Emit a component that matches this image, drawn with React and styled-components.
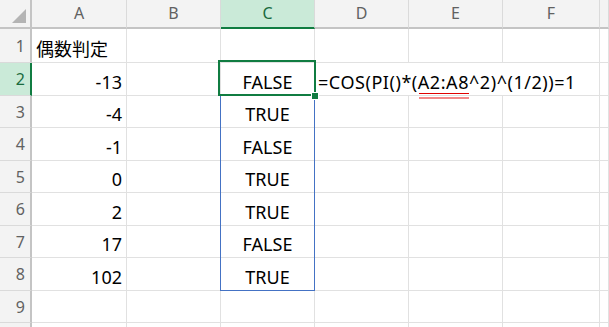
import styled, { createGlobalStyle, css } from 'styled-components'

const GlobalStyle = createGlobalStyle`
  html, body {
    margin: 0;
    padding: 0;
    background: #ffffff;
    overflow: hidden;
  }
  body {
    font-family: "Noto Sans", "Noto Sans CJK JP", sans-serif;
  }
`

const green = '#107c41'
const blue = '#4472c4'
const grid = '#e1e1e1'

const Sheet = styled.div`
  display: grid;
  grid-template-columns: 32px 95px 94px 94px 94px 94px 97px 1fr;
  grid-template-rows: 29px 34px 33px 32px 33px 32px 33px 32px 33px 32px 32px;
  width: 609px;
  height: 327px;
  overflow: hidden;
  background: #fff;
`

const Corner = styled.div`
  position: relative;
  box-sizing: border-box;
  background: #f3f3f3;
  border-right: 2px solid #c4c4c4;
  border-bottom: 2px solid #c4c4c4;

  &::after {
    content: '';
    position: absolute;
    right: 4px;
    bottom: 4px;
    width: 0;
    height: 0;
    border-left: 14px solid transparent;
    border-bottom: 14px solid #b4b4b4;
  }
`

const ColHead = styled.div`
  box-sizing: border-box;
  display: flex;
  align-items: center;
  justify-content: center;
  padding-bottom: 1px;
  background: #f3f3f3;
  color: #616161;
  font-size: 16px;
  border-right: 1px solid #dadada;
  border-bottom: 2px solid #c4c4c4;

  ${p => p.$active && css`
    background: #caead8;
    color: #1a6b3e;
    border-bottom-color: ${green};
  `}
`

const RowHead = styled.div`
  box-sizing: border-box;
  display: flex;
  align-items: center;
  justify-content: flex-end;
  padding-right: 5px;
  background: #f3f3f3;
  color: #616161;
  font-size: 16px;
  border-right: 2px solid #c4c4c4;
  border-bottom: 1px solid #dadada;

  ${p => p.$active && css`
    background: #caead8;
    color: #1a6b3e;
    border-right-color: ${green};
  `}
`

const Cell = styled.div`
  position: relative;
  box-sizing: border-box;
  display: flex;
  align-items: flex-end;
  justify-content: ${p => p.$align || 'flex-start'};
  padding: 0 4px 1px;
  font-size: 18px;
  line-height: 24px;
  color: #000;
  white-space: nowrap;
  border-right: 1px solid ${grid};
  border-bottom: 1px solid ${grid};
  grid-column: span ${p => p.$span || 1};

  ${p => p.$range && css`
    &::before {
      content: '';
      position: absolute;
      top: -1px;
      left: -1px;
      right: -1px;
      bottom: ${p.$last ? '-1px' : '0'};
      border: 1px solid ${blue};
      border-top: none;
      border-bottom: ${p.$last ? `1px solid ${blue}` : 'none'};
      pointer-events: none;
    }
  `}

  ${p => p.$selected && css`
    &::before {
      content: '';
      position: absolute;
      top: -3px;
      left: -3px;
      right: -2px;
      bottom: -1px;
      border: 2px solid ${green};
      z-index: 2;
    }
    &::after {
      content: '';
      position: absolute;
      right: -4px;
      bottom: -4px;
      width: 6px;
      height: 6px;
      background: ${green};
      outline: 1px solid #fff;
      z-index: 3;
    }
  `}
`

const Formula = styled(Cell)`
  padding-left: 3px;
  letter-spacing: 0.55px;
  z-index: 1;
`

// range reference with the red double underline under it
const Ref = styled.span`
  position: relative;

  &::before,
  &::after {
    content: '';
    position: absolute;
    left: 1px;
    right: 0;
    height: 1px;
  }
  &::before {
    bottom: 0px;
    background: #e00000;
  }
  &::after {
    bottom: -5px;
    height: 2px;
    background: #f28a8a;
  }
`

const columns = ['A', 'B', 'C', 'D', 'E', 'F', '']

const values = [
  [-13, 'FALSE'],
  [-4, 'TRUE'],
  [-1, 'FALSE'],
  [0, 'TRUE'],
  [2, 'TRUE'],
  [17, 'FALSE'],
  [102, 'TRUE'],
]

function Row({ n }) {
  const data = n >= 2 && n <= 8 ? values[n - 2] : null
  const cells = []

  // the tenth row only peeks in at the bottom edge, so its number stays hidden
  cells.push(<RowHead key="h" $active={n === 2}>{n < 10 ? n : ''}</RowHead>)
  cells.push(
    <Cell key="a" $align={n === 1 ? 'flex-start' : 'flex-end'}>
      {n === 1 ? '偶数判定' : data ? data[0] : ''}
    </Cell>
  )
  cells.push(<Cell key="b" />)
  cells.push(
    <Cell
      key="c"
      $align="center"
      $selected={n === 2}
      $range={n >= 3 && n <= 8}
      $last={n === 8}
    >
      {data ? data[1] : ''}
    </Cell>
  )

  if (n === 2) {
    cells.push(
      <Formula key="d" $span={3}>
        =COS(PI()*(<Ref>A2:A8</Ref>^2)^(1/2))=1
      </Formula>
    )
  } else {
    cells.push(<Cell key="d" />, <Cell key="e" />, <Cell key="f" />)
  }
  cells.push(<Cell key="g" />)

  return cells
}

export default function App() {
  const rows = Array.from({ length: 10 }, (_, i) => i + 1)

  return (
    <>
      <GlobalStyle />
      <Sheet>
        <Corner />
        {columns.map(c => (
          <ColHead key={c || 'g'} $active={c === 'C'}>{c}</ColHead>
        ))}
        {rows.map(n => <Row key={n} n={n} />)}
      </Sheet>
    </>
  )
}
